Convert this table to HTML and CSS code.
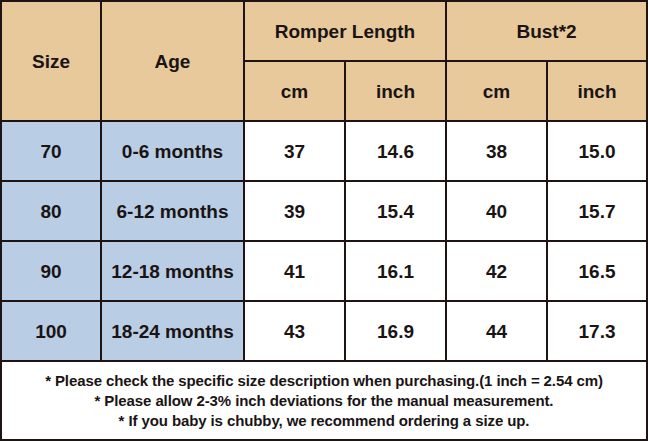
FILE: index.html
```html
<!DOCTYPE html>
<html>
<head>
<meta charset="utf-8">
<link rel="stylesheet" href="styles.css">
</head>
<body>
<div class="chart">
  <div class="cell head tall">Size</div>
  <div class="cell head tall">Age</div>
  <div class="cell head wide">Romper Length</div>
  <div class="cell head wide">Bust*2</div>
  <div class="cell head">cm</div>
  <div class="cell head">inch</div>
  <div class="cell head">cm</div>
  <div class="cell head">inch</div>

  <div class="cell blue">70</div>
  <div class="cell blue">0-6 months</div>
  <div class="cell">37</div>
  <div class="cell">14.6</div>
  <div class="cell">38</div>
  <div class="cell">15.0</div>

  <div class="cell blue">80</div>
  <div class="cell blue">6-12 months</div>
  <div class="cell">39</div>
  <div class="cell">15.4</div>
  <div class="cell">40</div>
  <div class="cell">15.7</div>

  <div class="cell blue">90</div>
  <div class="cell blue">12-18 months</div>
  <div class="cell">41</div>
  <div class="cell">16.1</div>
  <div class="cell">42</div>
  <div class="cell">16.5</div>

  <div class="cell blue">100</div>
  <div class="cell blue">18-24 months</div>
  <div class="cell">43</div>
  <div class="cell">16.9</div>
  <div class="cell">44</div>
  <div class="cell">17.3</div>

  <div class="cell note">
    <p>* Please check the specific size description when purchasing.(1 inch = 2.54 cm)</p>
    <p>* Please allow 2-3% inch deviations for the manual measurement.</p>
    <p>* If you baby is chubby, we recommend ordering a size up.</p>
  </div>
</div>
</body>
</html>
```

FILE: styles.css
```css
html, body {
  margin: 0;
  padding: 0;
  background: #ffffff;
}

.chart {
  width: 648px;
  height: 441px;
  box-sizing: border-box;
  padding: 2px 2px 1px 2px;
  background: #1e1414;
  display: grid;
  grid-template-columns: 98px 141px 99px 99px 99px 98px;
  grid-template-rows: 58px 58px 58px 58px 58px 58px 77px;
  gap: 2px;
  font-family: "Liberation Sans", Arial, sans-serif;
  font-weight: bold;
  color: #1a1414;
}

.cell {
  background: #ffffff;
  display: flex;
  align-items: center;
  justify-content: center;
  font-size: 19px;
  padding-top: 2px;
  box-sizing: border-box;
}

.head {
  background: #e8c99c;
}

.tall {
  grid-row: span 2;
}

.wide {
  grid-column: span 2;
}

.blue {
  background: #b9cde4;
}

.note {
  grid-column: span 6;
  flex-direction: column;
  font-size: 15px;
  letter-spacing: -0.1px;
  padding-top: 1px;
}

.note p {
  margin: 0;
  line-height: 20px;
  white-space: nowrap;
}
```
